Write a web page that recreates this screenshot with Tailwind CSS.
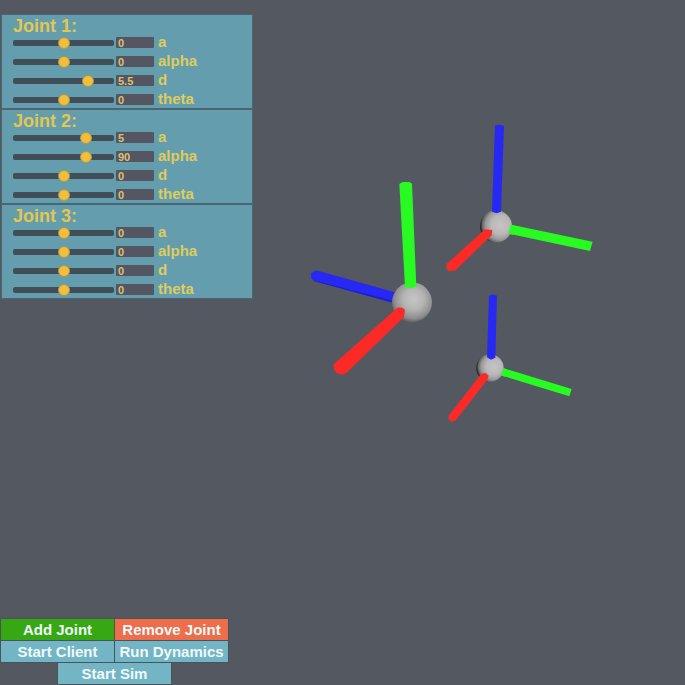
<!DOCTYPE html>
<html lang="en">
<head>
<meta charset="utf-8">
<meta name="viewport" content="width=device-width, initial-scale=1">
<title>Joint Simulator</title>
<script src="https://cdn.jsdelivr.net/npm/@tailwindcss/browser@4"></script>
</head>
<body class="bg-[#545861] font-['Liberation_Sans',Arial,sans-serif] font-bold">
<div class="relative flex min-h-screen flex-col justify-between overflow-hidden">

  <!-- 3D viewport -->
  <svg class="absolute inset-0 size-full" viewBox="0 0 685 685" role="img" aria-label="Joint coordinate frames">
    <defs>
      <radialGradient id="ball" cx="0.64" cy="0.46" r="0.66">
        <stop offset="0" stop-color="#c6c4c4"/>
        <stop offset="0.45" stop-color="#b9b7b7"/>
        <stop offset="0.7" stop-color="#9a9999"/>
        <stop offset="0.85" stop-color="#6b6a6a"/>
        <stop offset="0.94" stop-color="#2c2b2b"/>
        <stop offset="1" stop-color="#151414"/>
      </radialGradient>
      <radialGradient id="ballNear" cx="0.54" cy="0.42" r="0.64">
        <stop offset="0" stop-color="#c6c5c5"/>
        <stop offset="0.4" stop-color="#b6b5b5"/>
        <stop offset="0.75" stop-color="#8f8e8e"/>
        <stop offset="1" stop-color="#484747"/>
      </radialGradient>
    </defs>
    <g transform="translate(300 170) scale(0.33333)">
      <path fill="#2728f4" d="M33 310 48 301 290 368V402L274 397 42 333 33 323Z"/>
      <path fill="#1c1dd0" d="M40 331 274 391V397L42 333Z"/>
      <circle cx="336" cy="397" r="60" fill="url(#ballNear)"/>
      <path fill="#27fb22" d="M298 42 308 36H328L336 41 349 350 332 355 315 351Z"/>
      <path fill="#fc2a27" d="M101 583 294 412 306 413 315 419 312 441 140 608 127 614 109 609 101 596Z"/>
    </g>
    <g transform="translate(435 115) scale(0.33333)">
      <path fill="#27fb22" d="M222 328 473 380 465 408 215 355Z"/>
      <circle cx="183" cy="334" r="48" fill="url(#ball)"/>
      <path fill="#27fb22" d="M227 329 240 332 234 360 221 356Z"/>
      <path fill="#2728f4" d="M180 31 193 29 207 32 198 290 185 295 171 290Z"/>
      <path fill="#fc2a27" d="M35 447 150 343 172 345 170 361 60 467 40 468 34 458Z"/>
    </g>
    <g transform="translate(435 285) scale(0.33333)">
      <path fill="#27fb22" d="M200 248 410 312 403 334 195 270Z"/>
      <circle cx="165" cy="249" r="41" fill="url(#ball)"/>
      <path fill="#27fb22" d="M204 249 216 253 210 275 200 272Z"/>
      <path fill="#2728f4" d="M162 32 174 28 186 32 181 218 168 224 156 217Z"/>
      <path fill="#fc2a27" d="M41 392 139 266 152 264 161 272 157 284 63 405 51 411 40 402Z"/>
    </g>
  </svg>

  <!-- Joint parameter panels, filled from the template below -->
  <div id="joints" class="relative flex w-[250px] flex-col gap-0.5 pt-[15px] ml-0.5"></div>

  <!-- Actions -->
  <div class="relative ml-px mb-px grid w-[227px] grid-cols-4 gap-px text-[15px] leading-[21px] text-[#effafa]">
    <button type="button" class="col-span-2 h-[21px] bg-[#37a813] outline outline-[#48535b]">Add Joint</button>
    <button type="button" class="col-span-2 h-[21px] bg-[#ee6d4b] whitespace-nowrap outline outline-[#48535b]">Remove Joint</button>
    <button type="button" class="col-span-2 h-[21px] bg-[#73b4c5] outline outline-[#48535b]">Start Client</button>
    <button type="button" class="col-span-2 h-[21px] bg-[#73b4c5] whitespace-nowrap outline outline-[#48535b]">Run Dynamics</button>
    <button type="button" class="col-span-2 col-start-2 h-[21px] bg-[#73b4c5] outline outline-[#48535b]">Start Sim</button>
  </div>
</div>

<template id="panel">
  <section class="bg-[#649eae] pb-[3px] pl-[11px] outline outline-[#4b6670]">
    <h2 class="h-[22px] text-[18px] leading-[22px] text-[#e3c650]"></h2>
    <div class="flex flex-col gap-2"></div>
  </section>
</template>

<template id="row">
  <div class="flex h-[11px] items-center">
    <input type="range" class="h-3 w-[101px] appearance-none bg-transparent [&::-webkit-slider-runnable-track]:h-1.5 [&::-webkit-slider-runnable-track]:rounded-[2px] [&::-webkit-slider-runnable-track]:bg-[#414e58] [&::-webkit-slider-thumb]:-mt-[3px] [&::-webkit-slider-thumb]:size-3 [&::-webkit-slider-thumb]:appearance-none [&::-webkit-slider-thumb]:rounded-full [&::-webkit-slider-thumb]:border [&::-webkit-slider-thumb]:border-[#a79a4c] [&::-webkit-slider-thumb]:bg-[#f4bd3b]">
    <input type="text" class="ml-0.5 h-[11px] w-[38px] rounded-[1px] bg-[#545661] pl-0.5 text-[11px] leading-[11px] text-[#dcc070]">
    <label class="ml-1 pb-[3px] text-[15px] leading-[11px] text-[#dfcc5c]"></label>
  </div>
</template>

<script>
  const names = ['a', 'alpha', 'd', 'theta'];
  const limits = { a: 10, alpha: 180, d: 10, theta: 180 };
  const joints = [[0, 0, 5.5, 0], [5, 90, 0, 0], [0, 0, 0, 0]];

  joints.forEach((values, j) => {
    const panel = document.getElementById('panel').content.cloneNode(true);
    panel.querySelector('h2').textContent = `Joint ${j + 1}:`;
    names.forEach((name, i) => {
      const row = document.getElementById('row').content.cloneNode(true);
      const [slider, field] = row.querySelectorAll('input');
      const label = row.querySelector('label');
      slider.min = -limits[name];
      slider.max = limits[name];
      slider.step = 0.1;
      slider.value = values[i];
      slider.setAttribute('aria-label', `Joint ${j + 1} ${name}`);
      field.id = `joint${j + 1}-${name}`;
      field.value = values[i];
      label.htmlFor = field.id;
      label.textContent = name;
      slider.addEventListener('input', () => { field.value = slider.value; });
      field.addEventListener('change', () => { slider.value = field.value; });
      panel.querySelector('div').append(row);
    });
    document.getElementById('joints').append(panel);
  });
</script>
</body>
</html>
